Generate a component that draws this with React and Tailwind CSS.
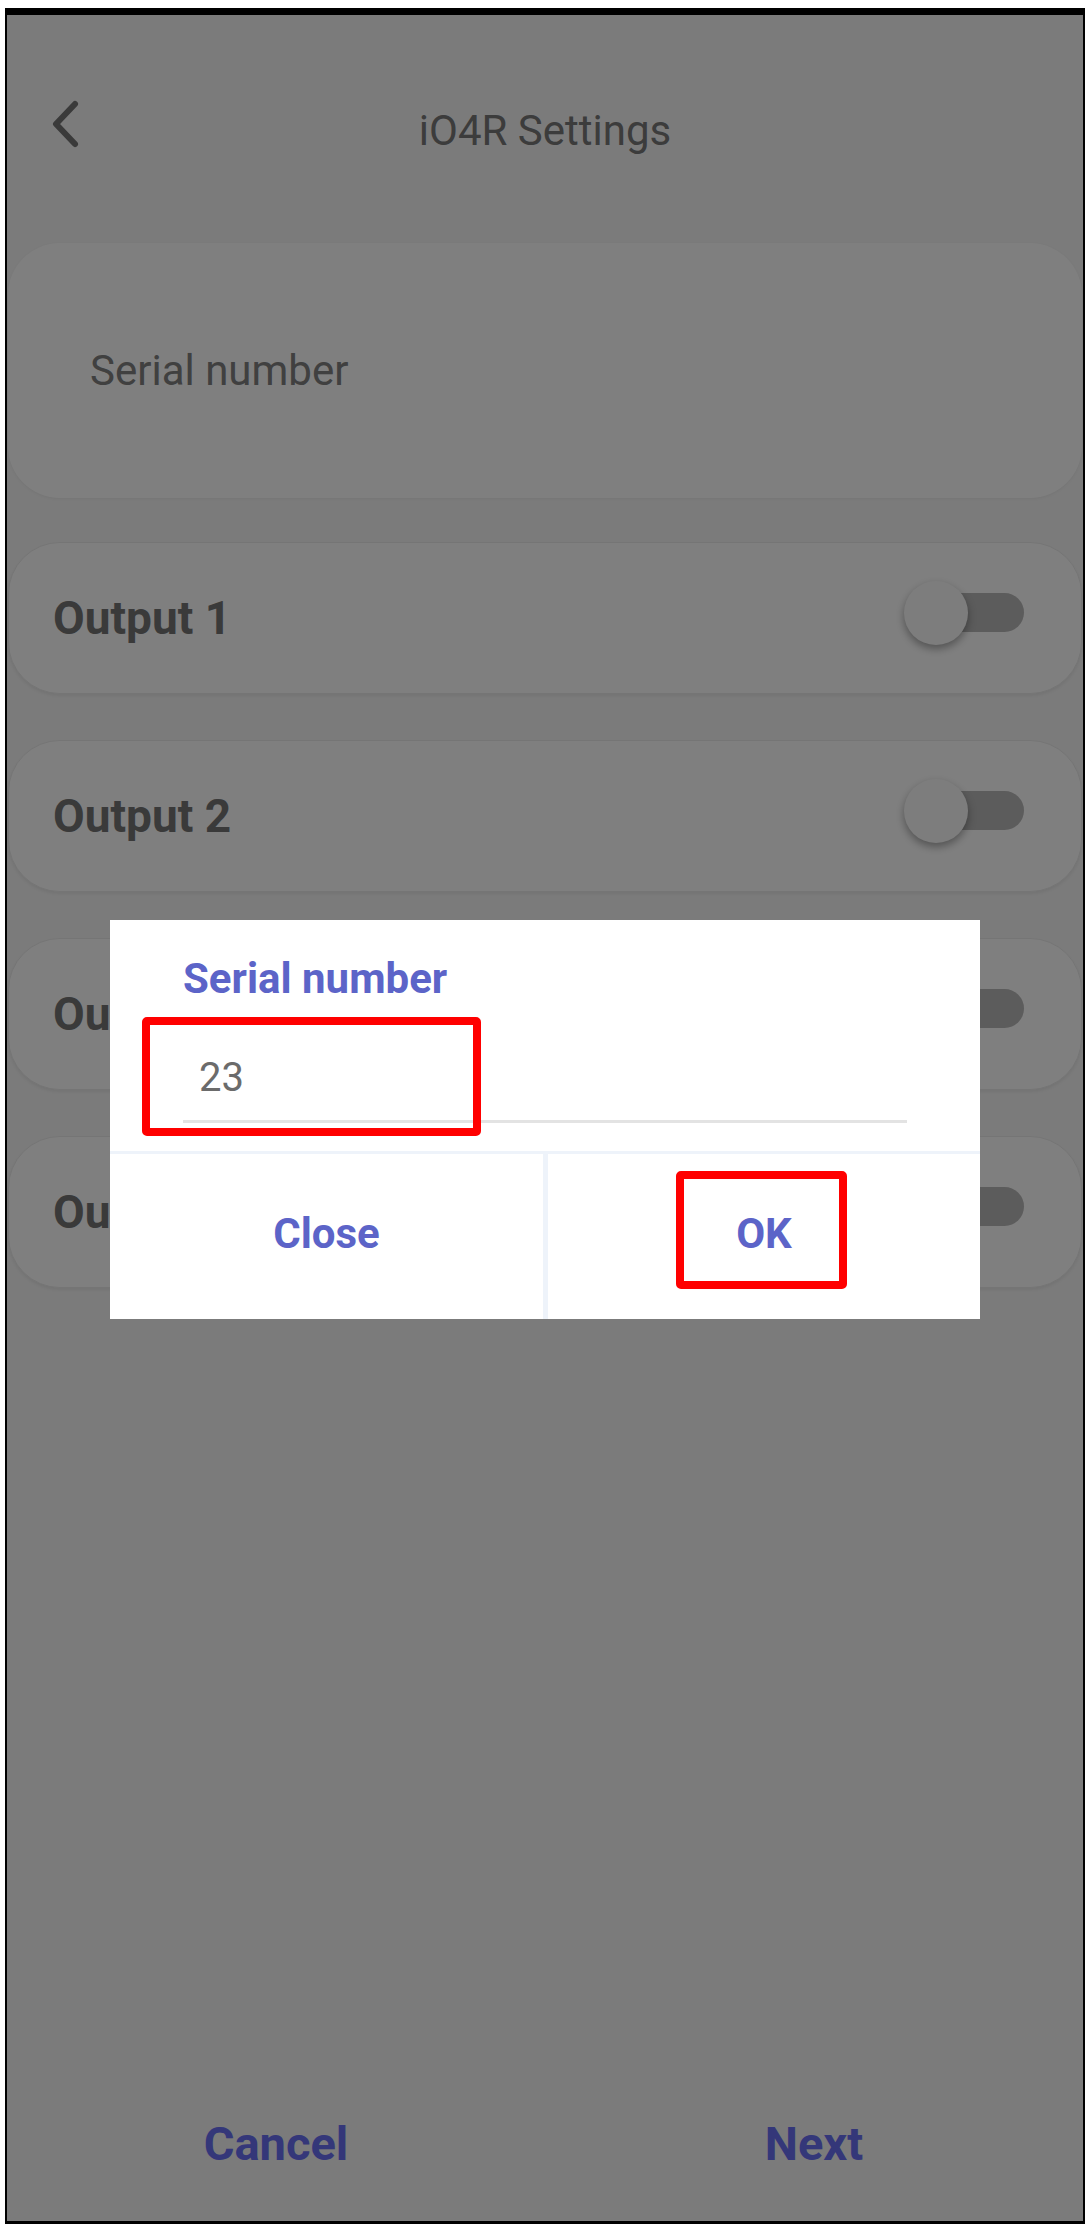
import React from 'react';

const outputs = ['Output 1', 'Output 2', 'Output 3', 'Output 4'];

function Toggle() {
  return (
    <div className="relative w-[120px] h-[64px] -mt-[10px] shrink-0">
      <div className="absolute right-0 top-[12px] w-[100px] h-[39px] rounded-full bg-[#b8b8b8]" />
      <div className="absolute left-0 top-0 w-[64px] h-[64px] rounded-full bg-[#fbfbfb] shadow-[0_4px_8px_rgba(0,0,0,0.35)]" />
    </div>
  );
}

function OutputRow({ label }) {
  return (
    <div className="mx-px h-[152px] flex items-center justify-between pl-[44px] pr-[57px] bg-white rounded-[52px] border border-[#ebebeb] shadow-[0_2px_3px_rgba(0,0,0,0.06)]">
      <span className="text-[46px] font-bold text-[#747474]">{label}</span>
      <Toggle />
    </div>
  );
}

function SerialDialog() {
  return (
    <div className="relative w-[870px] bg-white">
      <div className="pt-[34px] px-[73px]">
        <h2 className="text-[42px] leading-[50px] font-bold text-[#5c64c8]">Serial number</h2>
        <div className="mt-[50px] pl-[16px] pb-[18px] border-b-[3px] border-[#e3e3e3]">
          <span className="text-[40px] leading-[48px] text-[#6b6b6b]">23</span>
        </div>
      </div>
      <div className="mt-[28px] flex h-[168px] border-t-[3px] border-[#eef3fa]">
        <button className="w-[433px] flex items-center justify-center pb-[6px] text-[42px] font-bold text-[#5c64c8]">
          Close
        </button>
        <div className="w-[5px] bg-[#eef3fa]" />
        <button className="flex-1 flex items-center justify-center pb-[6px] text-[42px] font-bold text-[#5c64c8]">
          OK
        </button>
      </div>

      {/* highlight marks */}
      <div className="absolute left-[32px] top-[97px] w-[339px] h-[119px] border-[8px] border-[#ff0000] rounded-[5px]" />
      <div className="absolute left-[566px] top-[251px] w-[171px] h-[118px] border-[8px] border-[#ff0000] rounded-[5px]" />
    </div>
  );
}

export default function App() {
  return (
    <div className="min-h-screen bg-white pt-[8px] pl-[5px] font-['Roboto',sans-serif]">
      <div className="relative w-[1080px] h-[2216px] border-l-2 border-r-2 border-t-[7px] border-b-[3px] border-black bg-[#f6f6f6] flex flex-col">
        {/* Header */}
        <div className="mt-[65px] h-[100px] grid grid-cols-[1fr_auto_1fr] items-center">
          <div className="pl-[43px]">
            <svg width="30" height="50" viewBox="0 0 30 50" className="-mt-[12px]">
              <path d="M25 5 L6 25 L25 45" fill="none" stroke="#747474" strokeWidth="6" strokeLinecap="round" strokeLinejoin="round" />
            </svg>
          </div>
          <h1 className="text-[42px] text-[#787878]">iO4R Settings</h1>
          <div />
        </div>

        {/* Serial number field */}
        <div className="mt-[63px] mx-px h-[255px] flex items-center pl-[82px] bg-white rounded-[52px] shadow-[0_1px_3px_rgba(0,0,0,0.05)]">
          <span className="text-[42px] text-[#808080]">Serial number</span>
        </div>

        {/* Outputs */}
        <div className="mt-[44px] flex flex-col gap-[46px]">
          {outputs.map((o) => (
            <OutputRow key={o} label={o} />
          ))}
        </div>

        {/* Footer */}
        <div className="mt-auto h-[154px] flex items-center">
          <button className="flex-1 text-center text-[47px] font-bold text-[#686ef2]">Cancel</button>
          <button className="flex-1 text-center text-[47px] font-bold text-[#686ef2]">Next</button>
        </div>

        {/* Modal backdrop + dialog */}
        <div className="absolute inset-0 bg-[rgba(0,0,0,0.5)] flex justify-center items-start pt-[905px]">
          <SerialDialog />
        </div>
      </div>
    </div>
  );
}
